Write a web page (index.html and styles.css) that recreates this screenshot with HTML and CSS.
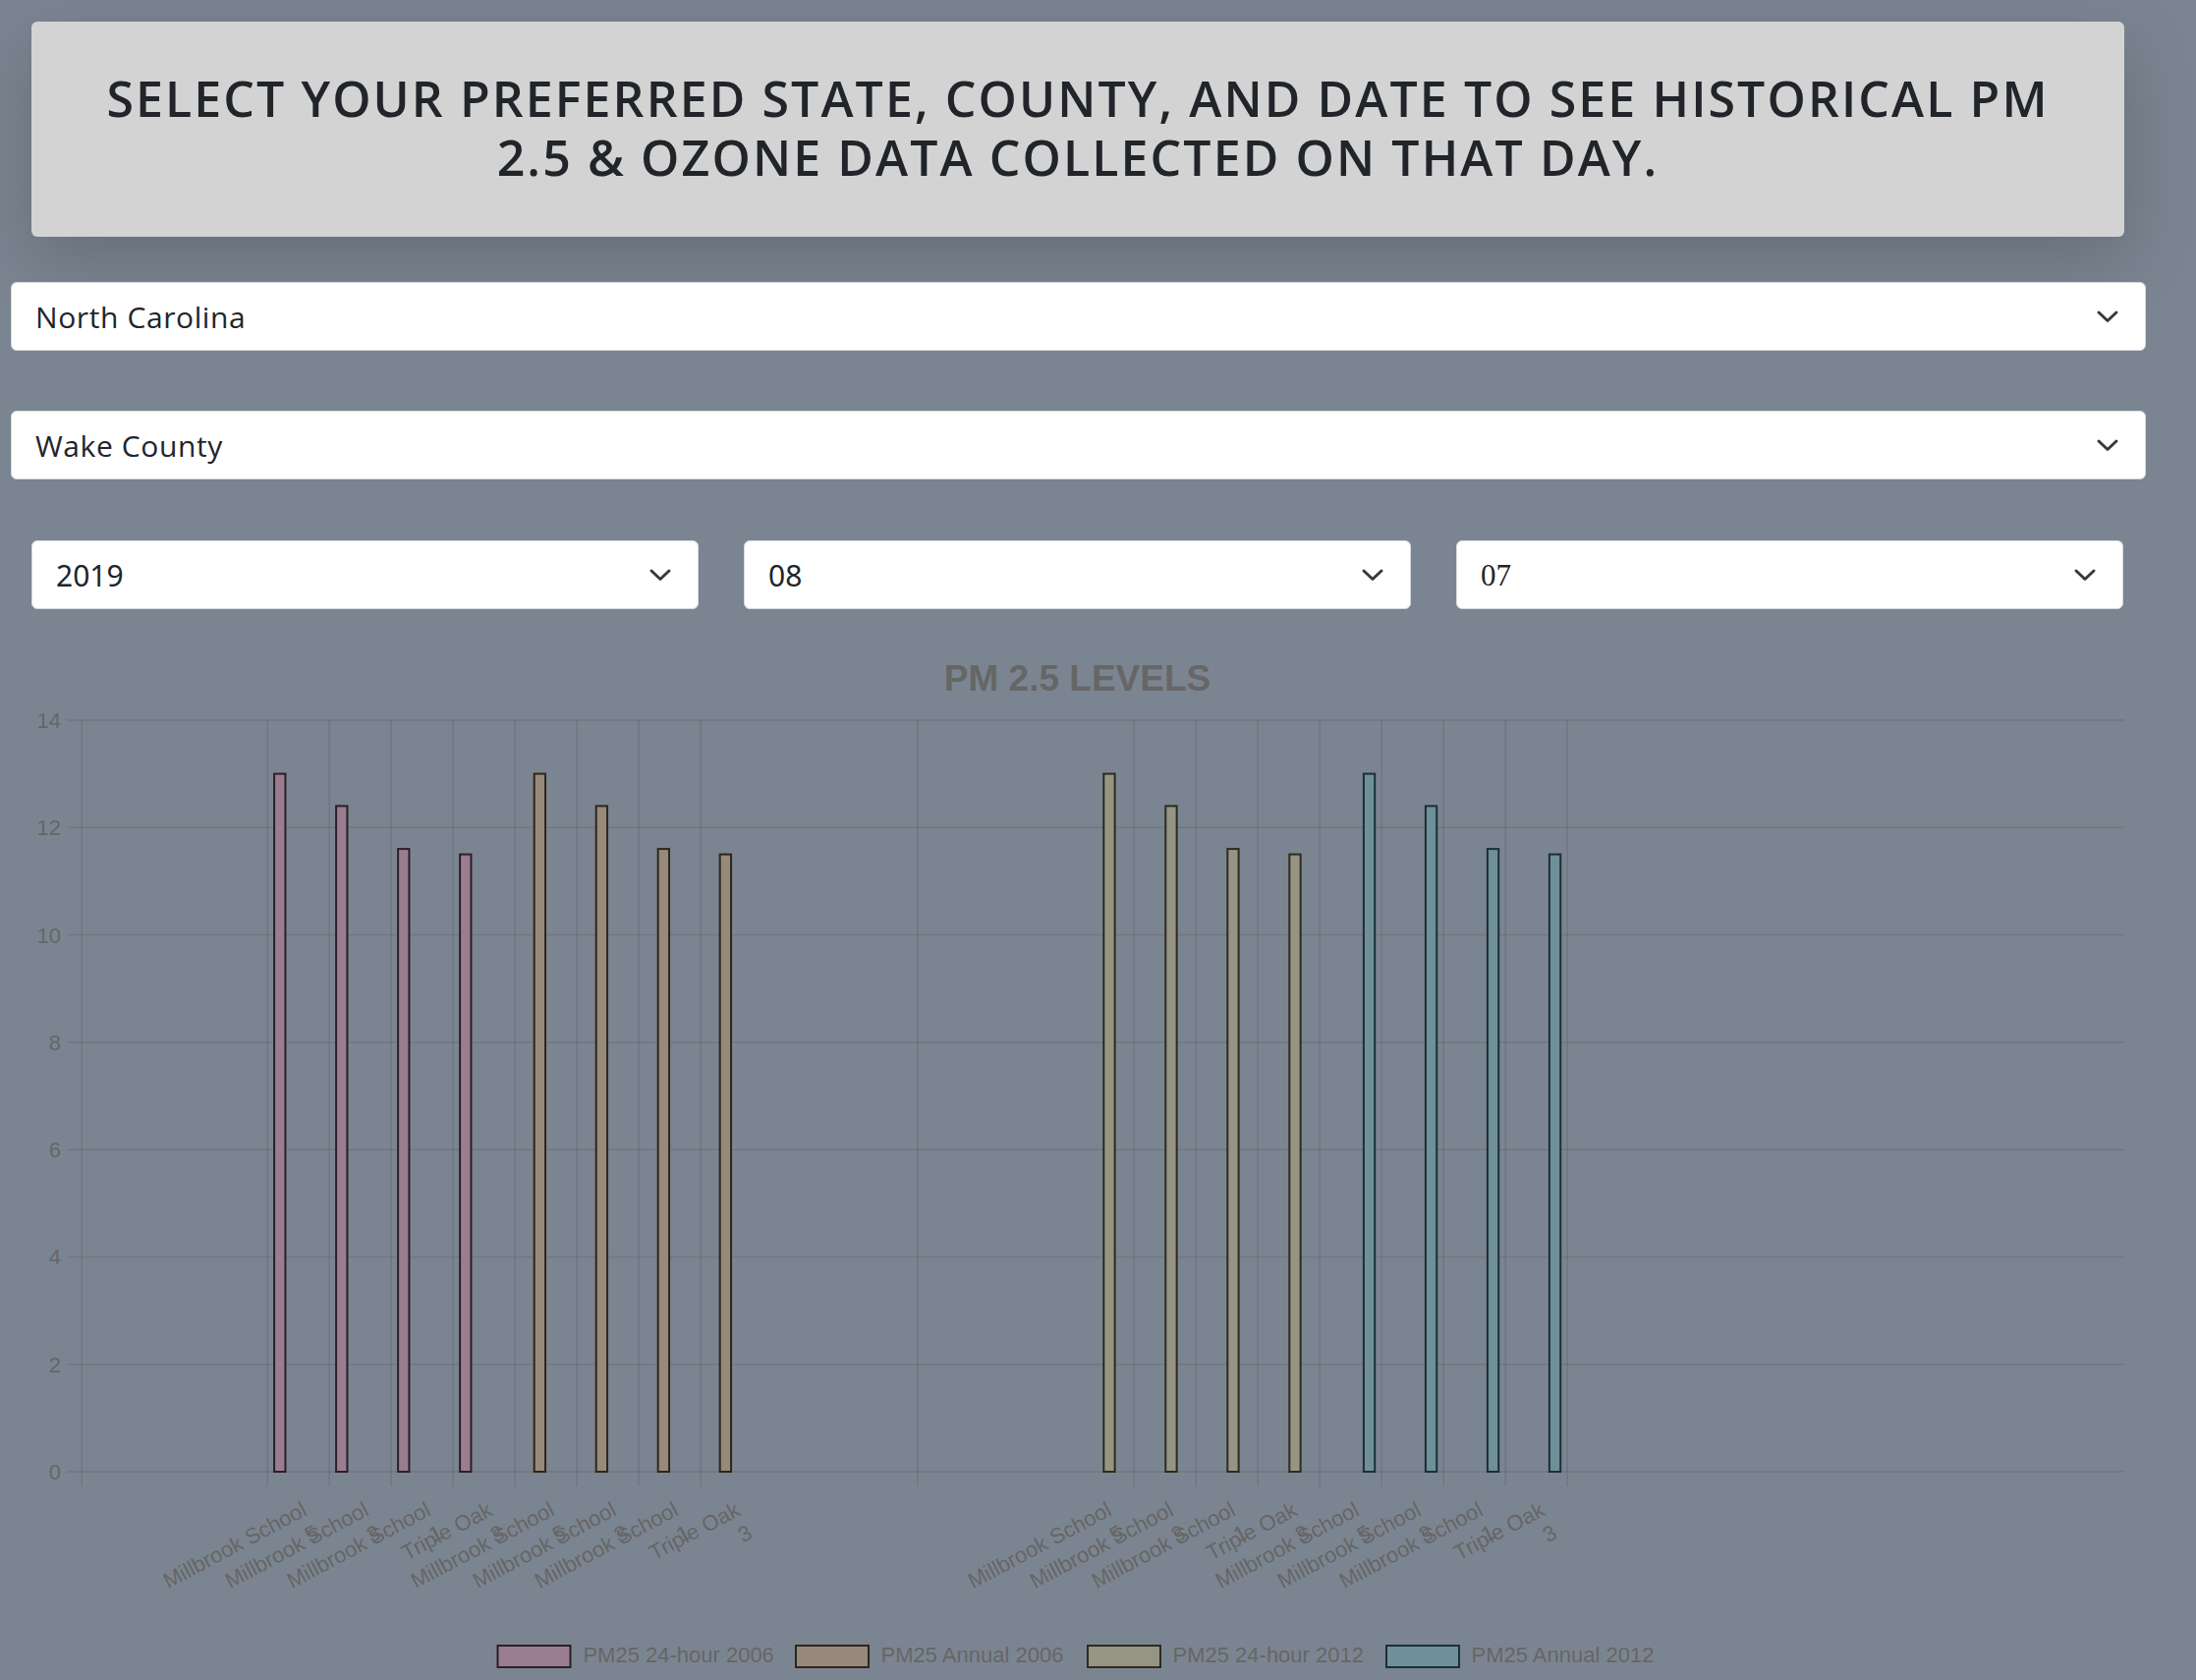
FILE: index.html
```html
<!DOCTYPE html>
<html lang="en">
<head>
<meta charset="utf-8">
<title>PM 2.5 &amp; Ozone History</title>
<link rel="stylesheet" href="styles.css">
</head>
<body>
<main class="page">
  <header class="banner">
    <h1 class="banner-title">SELECT YOUR PREFERRED STATE, COUNTY, AND DATE TO SEE HISTORICAL PM 2.5 &amp; OZONE DATA COLLECTED ON THAT DAY.</h1>
  </header>

  <div class="picker-wrap picker-wide picker-state">
    <select class="picker picker-brand"><option>North Carolina</option></select>
    <svg class="chevron" viewBox="0 0 24 14" width="24" height="14"><path d="M3 3l9 8.5 9-8.5" fill="none" stroke="#343a40" stroke-width="3" stroke-linecap="round" stroke-linejoin="round"/></svg>
  </div>

  <div class="picker-wrap picker-wide picker-county">
    <select class="picker picker-brand"><option>Wake County</option></select>
    <svg class="chevron" viewBox="0 0 24 14" width="24" height="14"><path d="M3 3l9 8.5 9-8.5" fill="none" stroke="#343a40" stroke-width="3" stroke-linecap="round" stroke-linejoin="round"/></svg>
  </div>

  <div class="date-row">
    <div class="picker-wrap">
      <select class="picker picker-system"><option>2019</option></select>
      <svg class="chevron" viewBox="0 0 24 14" width="24" height="14"><path d="M3 3l9 8.5 9-8.5" fill="none" stroke="#343a40" stroke-width="3" stroke-linecap="round" stroke-linejoin="round"/></svg>
    </div>
    <div class="picker-wrap">
      <select class="picker picker-system"><option>08</option></select>
      <svg class="chevron" viewBox="0 0 24 14" width="24" height="14"><path d="M3 3l9 8.5 9-8.5" fill="none" stroke="#343a40" stroke-width="3" stroke-linecap="round" stroke-linejoin="round"/></svg>
    </div>
    <div class="picker-wrap">
      <select class="picker picker-serif"><option>07</option></select>
      <svg class="chevron" viewBox="0 0 24 14" width="24" height="14"><path d="M3 3l9 8.5 9-8.5" fill="none" stroke="#343a40" stroke-width="3" stroke-linecap="round" stroke-linejoin="round"/></svg>
    </div>
  </div>

  <figure class="chart">
    <svg class="chart-svg" viewBox="0 0 2130 1070" width="2130" height="1070">
      <text class="chart-title" x="1064.5" y="63" text-anchor="middle">PM 2.5 LEVELS</text>

      <g class="grid">
        <line x1="36" y1="93" x2="2130" y2="93"/>
        <line x1="36" y1="202.3" x2="2130" y2="202.3"/>
        <line x1="36" y1="311.6" x2="2130" y2="311.6"/>
        <line x1="36" y1="420.9" x2="2130" y2="420.9"/>
        <line x1="36" y1="530.2" x2="2130" y2="530.2"/>
        <line x1="36" y1="639.4" x2="2130" y2="639.4"/>
        <line x1="36" y1="748.7" x2="2130" y2="748.7"/>
        <line x1="36" y1="858" x2="2130" y2="858"/>

        <line x1="51.2" y1="93" x2="51.2" y2="873"/>
        <line x1="240.2" y1="93" x2="240.2" y2="873"/>
        <line x1="303.2" y1="93" x2="303.2" y2="873"/>
        <line x1="366.2" y1="93" x2="366.2" y2="873"/>
        <line x1="429.2" y1="93" x2="429.2" y2="873"/>
        <line x1="492.2" y1="93" x2="492.2" y2="873"/>
        <line x1="555.2" y1="93" x2="555.2" y2="873"/>
        <line x1="618.2" y1="93" x2="618.2" y2="873"/>
        <line x1="681.2" y1="93" x2="681.2" y2="873"/>
        <line x1="901.7" y1="93" x2="901.7" y2="873"/>
        <line x1="1122.2" y1="93" x2="1122.2" y2="873"/>
        <line x1="1185.2" y1="93" x2="1185.2" y2="873"/>
        <line x1="1248.2" y1="93" x2="1248.2" y2="873"/>
        <line x1="1311.2" y1="93" x2="1311.2" y2="873"/>
        <line x1="1374.2" y1="93" x2="1374.2" y2="873"/>
        <line x1="1437.2" y1="93" x2="1437.2" y2="873"/>
        <line x1="1500.2" y1="93" x2="1500.2" y2="873"/>
        <line x1="1563.2" y1="93" x2="1563.2" y2="873"/>
      </g>

      <g class="y-labels">
        <text x="30" y="93" dy="0.36em">14</text>
        <text x="30" y="202.3" dy="0.36em">12</text>
        <text x="30" y="311.6" dy="0.36em">10</text>
        <text x="30" y="420.9" dy="0.36em">8</text>
        <text x="30" y="530.2" dy="0.36em">6</text>
        <text x="30" y="639.4" dy="0.36em">4</text>
        <text x="30" y="748.7" dy="0.36em">2</text>
        <text x="30" y="858" dy="0.36em">0</text>
      </g>

      <g class="bars bars-pink">
        <rect x="247.1" y="147.6" width="11.34" height="710.4"/>
        <rect x="310.1" y="180.4" width="11.34" height="677.6"/>
        <rect x="373.1" y="224.1" width="11.34" height="633.9"/>
        <rect x="436.1" y="229.6" width="11.34" height="628.4"/>
      </g>
      <g class="bars bars-brown">
        <rect x="511.7" y="147.6" width="11.34" height="710.4"/>
        <rect x="574.7" y="180.4" width="11.34" height="677.6"/>
        <rect x="637.7" y="224.1" width="11.34" height="633.9"/>
        <rect x="700.7" y="229.6" width="11.34" height="628.4"/>
      </g>
      <g class="bars bars-khaki">
        <rect x="1091.3" y="147.6" width="11.34" height="710.4"/>
        <rect x="1154.3" y="180.4" width="11.34" height="677.6"/>
        <rect x="1217.3" y="224.1" width="11.34" height="633.9"/>
        <rect x="1280.3" y="229.6" width="11.34" height="628.4"/>
      </g>
      <g class="bars bars-blue">
        <rect x="1355.9" y="147.6" width="11.34" height="710.4"/>
        <rect x="1418.9" y="180.4" width="11.34" height="677.6"/>
        <rect x="1481.9" y="224.1" width="11.34" height="633.9"/>
        <rect x="1544.9" y="229.6" width="11.34" height="628.4"/>
      </g>

      <g class="x-labels" text-anchor="end">
        <text transform="translate(281.7 901.5) rotate(-28)"><tspan x="0" y="0">Millbrook School</tspan><tspan x="0" dy="26.4">5</tspan></text>
        <text transform="translate(344.7 901.5) rotate(-28)"><tspan x="0" y="0">Millbrook School</tspan><tspan x="0" dy="26.4">3</tspan></text>
        <text transform="translate(407.7 901.5) rotate(-28)"><tspan x="0" y="0">Millbrook School</tspan><tspan x="0" dy="26.4">1</tspan></text>
        <text transform="translate(470.7 901.5) rotate(-28)"><tspan x="0" y="0">Triple Oak</tspan><tspan x="0" dy="26.4">3</tspan></text>
        <text transform="translate(533.7 901.5) rotate(-28)"><tspan x="0" y="0">Millbrook School</tspan><tspan x="0" dy="26.4">5</tspan></text>
        <text transform="translate(596.7 901.5) rotate(-28)"><tspan x="0" y="0">Millbrook School</tspan><tspan x="0" dy="26.4">3</tspan></text>
        <text transform="translate(659.7 901.5) rotate(-28)"><tspan x="0" y="0">Millbrook School</tspan><tspan x="0" dy="26.4">1</tspan></text>
        <text transform="translate(722.7 901.5) rotate(-28)"><tspan x="0" y="0">Triple Oak</tspan><tspan x="0" dy="26.4">3</tspan></text>

        <text transform="translate(1100.7 901.5) rotate(-28)"><tspan x="0" y="0">Millbrook School</tspan><tspan x="0" dy="26.4">5</tspan></text>
        <text transform="translate(1163.7 901.5) rotate(-28)"><tspan x="0" y="0">Millbrook School</tspan><tspan x="0" dy="26.4">3</tspan></text>
        <text transform="translate(1226.7 901.5) rotate(-28)"><tspan x="0" y="0">Millbrook School</tspan><tspan x="0" dy="26.4">1</tspan></text>
        <text transform="translate(1289.7 901.5) rotate(-28)"><tspan x="0" y="0">Triple Oak</tspan><tspan x="0" dy="26.4">3</tspan></text>
        <text transform="translate(1352.7 901.5) rotate(-28)"><tspan x="0" y="0">Millbrook School</tspan><tspan x="0" dy="26.4">5</tspan></text>
        <text transform="translate(1415.7 901.5) rotate(-28)"><tspan x="0" y="0">Millbrook School</tspan><tspan x="0" dy="26.4">3</tspan></text>
        <text transform="translate(1478.7 901.5) rotate(-28)"><tspan x="0" y="0">Millbrook School</tspan><tspan x="0" dy="26.4">1</tspan></text>
        <text transform="translate(1541.7 901.5) rotate(-28)"><tspan x="0" y="0">Triple Oak</tspan><tspan x="0" dy="26.4">3</tspan></text>
      </g>

      <g class="legend">
        <rect class="swatch-pink" x="474.5" y="1035" width="74" height="22"/>
        <text x="561.4" y="1052">PM25 24-hour 2006</text>
        <rect class="swatch-brown" x="778" y="1035" width="74" height="22"/>
        <text x="864.5" y="1052">PM25 Annual 2006</text>
        <rect class="swatch-khaki" x="1075" y="1035" width="74" height="22"/>
        <text x="1161.5" y="1052">PM25 24-hour 2012</text>
        <rect class="swatch-blue" x="1379" y="1035" width="74" height="22"/>
        <text x="1465.5" y="1052">PM25 Annual 2012</text>
      </g>
    </svg>
  </figure>
</main>
</body>
</html>
```

FILE: styles.css
```css
* {
  box-sizing: border-box;
}

html,
body {
  margin: 0;
  padding: 0;
}

body {
  background: #7b8591;
  color: #212529;
  font-family: "Open Sans", "Noto Sans", sans-serif;
  overflow: hidden;
}

.page {
  display: flex;
  flex-direction: column;
  padding-top: 22px;
}

.banner {
  margin: 0 73px 0 32px;
  height: 219px;
  padding: 48px 55px 51px;
  background: #d3d3d3;
  border-radius: 6px;
  box-shadow: 0 24px 72px rgba(0, 0, 0, 0.175);
}

.banner-title {
  margin: 0;
  font-family: "Open Sans", "Noto Sans", sans-serif;
  font-weight: 600;
  font-size: 50px;
  line-height: 60px;
  letter-spacing: 2.1px;
  text-align: center;
  color: #212529;
}

.picker-wrap {
  position: relative;
  display: flex;
}

.picker-wide {
  margin-left: 11px;
  margin-right: 51px;
}

.picker-state {
  margin-top: 46px;
}

.picker-county {
  margin-top: 61px;
}

.picker {
  appearance: none;
  -webkit-appearance: none;
  display: block;
  width: 100%;
  height: 70px;
  padding: 0 70px 0 24px;
  background: #ffffff;
  border: 1px solid #d6dae0;
  border-radius: 6px;
  color: #212529;
  font-size: 30px;
  outline: none;
}

.picker-brand {
  font-family: "Open Sans", "Noto Sans", sans-serif;
  letter-spacing: 0.6px;
}

.picker-system {
  font-family: "Noto Sans", "Open Sans", sans-serif;
}

.picker-serif {
  font-family: "Liberation Serif", "Times New Roman", serif;
  font-size: 31px;
}

.chevron {
  position: absolute;
  right: 27px;
  top: 50%;
  margin-top: -7px;
  pointer-events: none;
}

.date-row {
  display: grid;
  grid-template-columns: repeat(3, 1fr);
  gap: 46px;
  margin: 62px 74px 0 32px;
}

.chart {
  margin: 20px 0 0 32px;
  width: 2130px;
}

.chart-svg {
  display: block;
  font-family: "Liberation Sans", Arial, sans-serif;
}

.chart-title {
  font-size: 37px;
  font-weight: 700;
  fill: #666666;
}

.grid line {
  stroke: rgba(0, 0, 0, 0.1);
  stroke-width: 1.5;
}

.y-labels text {
  font-size: 22px;
  fill: #666666;
  text-anchor: end;
}

.x-labels text {
  font-size: 22px;
  fill: #666666;
}

.legend text {
  font-size: 22px;
  fill: #666666;
}

.bars rect {
  stroke-width: 2;
}

.bars-pink rect,
.swatch-pink {
  fill: #9a7d90;
  stroke: #2e1e27;
}

.bars-brown rect,
.swatch-brown {
  fill: #978a7d;
  stroke: #2f2619;
}

.bars-khaki rect,
.swatch-khaki {
  fill: #969482;
  stroke: #2c2b1e;
}

.bars-blue rect,
.swatch-blue {
  fill: #6f8f99;
  stroke: #1b2f36;
}

.legend rect {
  stroke-width: 2;
}
```
